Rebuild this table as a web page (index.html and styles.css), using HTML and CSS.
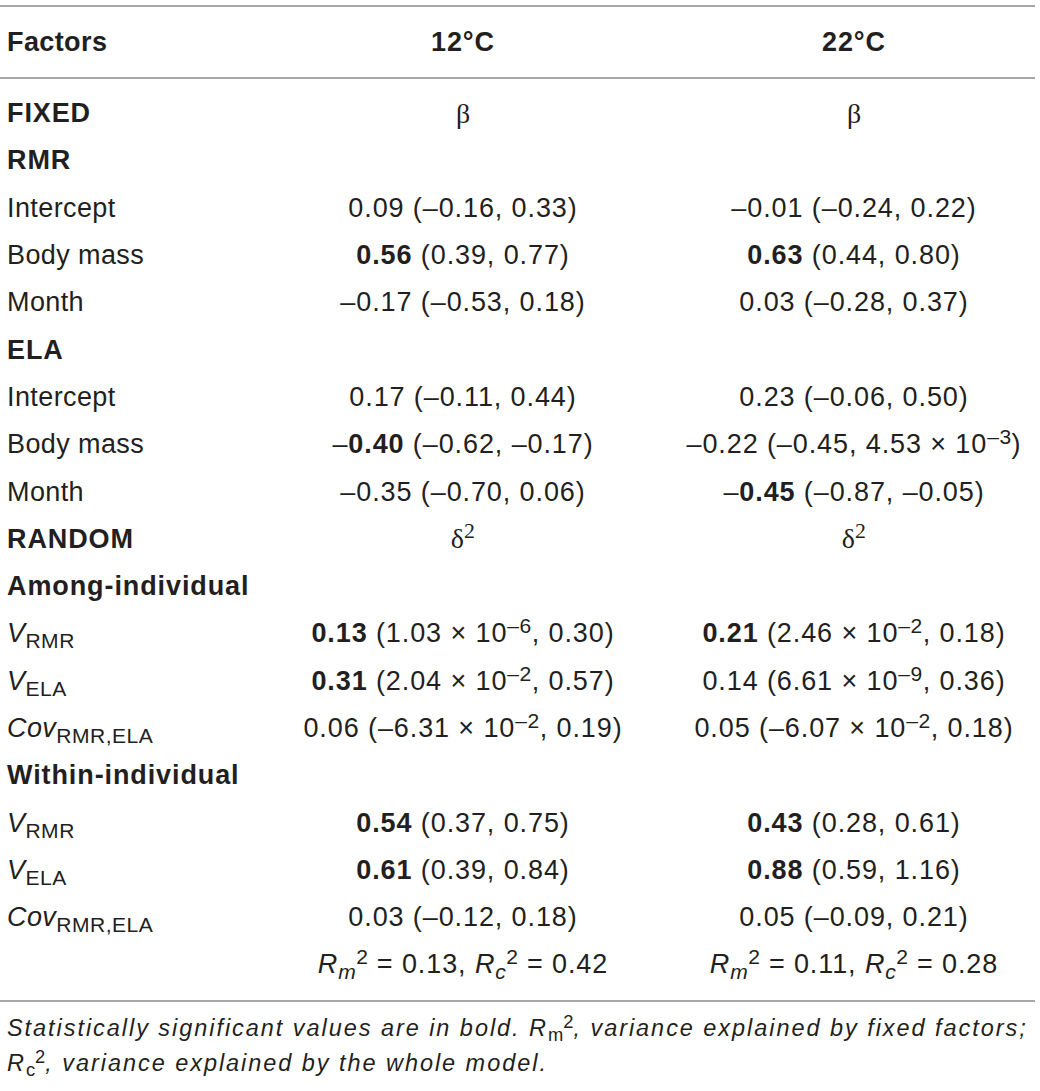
FILE: index.html
```html
<!DOCTYPE html>
<html lang="en">
	<head>
		<meta charset="UTF-8" />
		<title>Model estimates</title>
		<link rel="stylesheet" href="styles.css">
	</head>
	<body>
		<table class="stats">
			<thead>
				<tr>
					<th class="label">Factors</th>
					<th>12°C</th>
					<th class="last">22°C</th>
				</tr>
			</thead>
			<tbody>
				<tr class="first">
					<td class="label"><b>FIXED</b></td>
					<td><span class="greek">β</span></td>
					<td class="last"><span class="greek">β</span></td>
				</tr>
				<tr>
					<td class="label"><b>RMR</b></td>
					<td></td>
					<td class="last"></td>
				</tr>
				<tr>
					<td class="label">Intercept</td>
					<td>0.09 (–0.16, 0.33)</td>
					<td class="last">–0.01 (–0.24, 0.22)</td>
				</tr>
				<tr>
					<td class="label">Body mass</td>
					<td><b>0.56</b> (0.39, 0.77)</td>
					<td class="last"><b>0.63</b> (0.44, 0.80)</td>
				</tr>
				<tr>
					<td class="label">Month</td>
					<td>–0.17 (–0.53, 0.18)</td>
					<td class="last">0.03 (–0.28, 0.37)</td>
				</tr>
				<tr>
					<td class="label"><b>ELA</b></td>
					<td></td>
					<td class="last"></td>
				</tr>
				<tr>
					<td class="label">Intercept</td>
					<td>0.17 (–0.11, 0.44)</td>
					<td class="last">0.23 (–0.06, 0.50)</td>
				</tr>
				<tr>
					<td class="label">Body mass</td>
					<td>–<b>0.40</b> (–0.62, –0.17)</td>
					<td class="last">–0.22 (–0.45, 4.53 × 10<sup>–3</sup>)</td>
				</tr>
				<tr>
					<td class="label">Month</td>
					<td>–0.35 (–0.70, 0.06)</td>
					<td class="last">–<b>0.45</b> (–0.87, –0.05)</td>
				</tr>
				<tr>
					<td class="label"><b>RANDOM</b></td>
					<td><span class="greek">δ<sup>2</sup></span></td>
					<td class="last"><span class="greek">δ<sup>2</sup></span></td>
				</tr>
				<tr>
					<td class="label"><b>Among-individual</b></td>
					<td></td>
					<td class="last"></td>
				</tr>
				<tr>
					<td class="label"><i>V</i><sub>RMR</sub></td>
					<td><b>0.13</b> (1.03 × 10<sup>–6</sup>, 0.30)</td>
					<td class="last"><b>0.21</b> (2.46 × 10<sup>–2</sup>, 0.18)</td>
				</tr>
				<tr>
					<td class="label"><i>V</i><sub>ELA</sub></td>
					<td><b>0.31</b> (2.04 × 10<sup>–2</sup>, 0.57)</td>
					<td class="last">0.14 (6.61 × 10<sup>–9</sup>, 0.36)</td>
				</tr>
				<tr>
					<td class="label"><i>Cov</i><sub>RMR,ELA</sub></td>
					<td>0.06 (–6.31 × 10<sup>–2</sup>, 0.19)</td>
					<td class="last">0.05 (–6.07 × 10<sup>–2</sup>, 0.18)</td>
				</tr>
				<tr>
					<td class="label"><b>Within-individual</b></td>
					<td></td>
					<td class="last"></td>
				</tr>
				<tr>
					<td class="label"><i>V</i><sub>RMR</sub></td>
					<td><b>0.54</b> (0.37, 0.75)</td>
					<td class="last"><b>0.43</b> (0.28, 0.61)</td>
				</tr>
				<tr>
					<td class="label"><i>V</i><sub>ELA</sub></td>
					<td><b>0.61</b> (0.39, 0.84)</td>
					<td class="last"><b>0.88</b> (0.59, 1.16)</td>
				</tr>
				<tr>
					<td class="label"><i>Cov</i><sub>RMR,ELA</sub></td>
					<td>0.03 (–0.12, 0.18)</td>
					<td class="last">0.05 (–0.09, 0.21)</td>
				</tr>
				<tr class="end">
					<td class="label"></td>
					<td><i>R<sub>m</sub></i><sup>2</sup> = 0.13, <i>R<sub>c</sub></i><sup>2</sup> = 0.42</td>
					<td class="last"><i>R<sub>m</sub></i><sup>2</sup> = 0.11, <i>R<sub>c</sub></i><sup>2</sup> = 0.28</td>
				</tr>
			</tbody>
		</table>

		<p class="note">Statistically significant values are in bold. R<sub>m</sub><sup>2</sup>, variance explained by fixed factors; R<sub>c</sub><sup>2</sup>, variance explained by the whole model.</p>
	</body>
</html>
```

FILE: styles.css
```css
body {
	margin: 0;
	padding: 5px 0 0 0;
	background: #fff;
	color: #231f20;
	font-family: "Liberation Sans", Arial, sans-serif;
}

.stats {
	width: 1035px;
	border-collapse: collapse;
	font-size: 27px;
	letter-spacing: 0.9px;
	table-layout: fixed;
}

.stats b,
.stats th {
	letter-spacing: 0.9px;
}

.stats .label {
	letter-spacing: 0.4px;
}

.stats thead tr {
	height: 72px;
	border-top: 2px solid #a7a7a7;
	border-bottom: 2px solid #a7a7a7;
}

.stats th {
	font-weight: bold;
	text-align: center;
	padding: 0;
}

.stats td {
	text-align: center;
	padding: 0;
	height: 47.3px;
	white-space: nowrap;
}

.stats .label {
	text-align: left;
	padding-left: 7px;
	width: 283px;
}

.stats th:nth-child(2) {
	width: 346px;
}

.stats .last {
	padding-left: 37px;
}

.stats tr.first td {
	padding-top: 11px;
}

.stats tr.end {
	border-bottom: 2px solid #a7a7a7;
}

.stats tr.end td {
	padding-bottom: 11px;
}

.greek {
	font-family: "Liberation Serif", "Times New Roman", serif;
	font-size: 28px;
	letter-spacing: 0;
}

sup,
sub {
	font-size: 0.78em;
	line-height: 0;
	letter-spacing: 0.5px;
}

sup {
	vertical-align: 0.45em;
}

sub {
	vertical-align: -0.3em;
}

.note {
	margin: 9px 0 0 7px;
	width: 1033px;
	font-size: 23.5px;
	font-style: italic;
	letter-spacing: 1.95px;
	line-height: 35px;
}

.note sub,
.note sup {
	font-style: normal;
	letter-spacing: 0;
}
```
